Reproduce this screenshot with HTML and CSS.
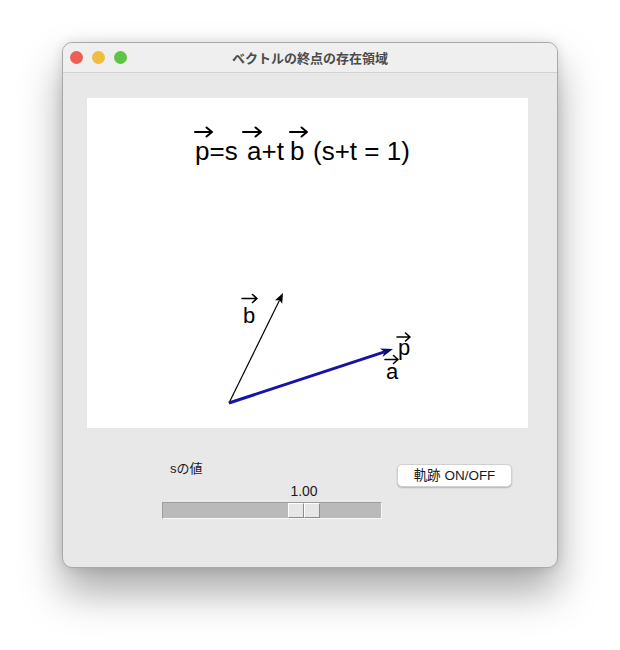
FILE: index.html
```html
<!DOCTYPE html>
<html lang="ja">
<head>
<meta charset="utf-8">
<title>ベクトルの終点の存在領域</title>
<link rel="stylesheet" href="styles.css">
</head>
<body>
<div class="window">
  <div class="titlebar">
    <div class="lights">
      <span class="light red"></span>
      <span class="light yellow"></span>
      <span class="light green"></span>
    </div>
    <div class="title">ベクトルの終点の存在領域</div>
    <div></div>
  </div>
  <div class="content">
    <svg class="canvas" width="441" height="330" viewBox="87 98 441 330" xmlns="http://www.w3.org/2000/svg">
      <rect x="87" y="98" width="441" height="330" fill="#ffffff"/>
      <!-- formula -->
      <g class="formula">
        <text x="195" y="160">p=s</text>
        <text x="247" y="160">a+t</text>
        <text x="290" y="160">b</text>
        <text x="313" y="160">(s+t = 1)</text>
      </g>
      <g fill="none" stroke="#000" stroke-width="2" stroke-linecap="round" stroke-linejoin="round">
        <path d="M195 132 H212 M206.5 127.5 L212 132 L206.5 136.5"/>
        <path d="M243 132 H261 M255.5 127.5 L261 132 L255.5 136.5"/>
        <path d="M290 132 H307 M301.5 127.5 L307 132 L301.5 136.5"/>
      </g>
      <!-- vector b -->
      <line x1="229" y1="403" x2="279.5" y2="300.2" stroke="#000" stroke-width="1.2"/>
      <polygon points="283,293 282.2,303.7 279.5,300.2 275,300.2" fill="#000"/>
      <!-- vector a (under p) -->
      <line x1="229" y1="403" x2="384.5" y2="351.8" stroke="#000" stroke-width="1"/>
      <!-- vector p -->
      <line x1="229" y1="403" x2="384.5" y2="351.8" stroke="#1414a8" stroke-width="3"/>
      <polygon points="393,349 382.6,357 384.5,351.8 380,348.6" fill="#0c0c6e"/>
      <!-- labels -->
      <g class="label">
        <text x="243" y="323">b</text>
        <text x="398" y="355">p</text>
        <text x="386" y="379">a</text>
      </g>
      <g fill="none" stroke="#000" stroke-width="1.6" stroke-linecap="round" stroke-linejoin="round">
        <path d="M242 298.5 H257 M252.5 294.5 L257 298.5 L252.5 302.5"/>
        <path d="M397 337 H410 M405.5 333 L410 337 L405.5 341"/>
        <path d="M385 359.5 H398 M393.5 355.5 L398 359.5 L393.5 363.5"/>
      </g>
    </svg>
    <div class="controls">
      <div class="scale">
        <div class="scale-label">sの値</div>
        <div class="scale-value" style="margin-left:124px">1.00</div>
        <div class="trough">
          <div class="thumb" style="margin-left:125px">
            <span class="thumb-half"></span>
            <span class="thumb-half"></span>
          </div>
        </div>
      </div>
      <button class="toggle">軌跡 ON/OFF</button>
    </div>
  </div>
</div>
</body>
</html>
```

FILE: styles.css
```css
html, body {
  margin: 0;
  padding: 0;
  background: #ffffff;
}

body {
  width: 620px;
  height: 650px;
  overflow: hidden;
  font-family: "Liberation Sans", "Noto Sans CJK JP", sans-serif;
}

.window {
  margin: 42px 0 0 62px;
  width: 496px;
  height: 526px;
  box-sizing: border-box;
  border: 1px solid #a9a9a9;
  border-radius: 10px;
  overflow: hidden;
  background: #e8e8e8;
  box-shadow: 0 24px 42px rgba(0, 0, 0, 0.34), 0 0 12px rgba(0, 0, 0, 0.12);
}

.titlebar {
  height: 29px;
  border-bottom: 1px solid #d2d2d2;
  background: #efefef;
  display: grid;
  grid-template-columns: 1fr auto 1fr;
  align-items: center;
}

.lights {
  display: flex;
  gap: 9px;
  padding-left: 7px;
}

.light {
  width: 13px;
  height: 13px;
  border-radius: 50%;
  display: block;
}

.red { background: #ec5f56; }
.yellow { background: #f2bc3d; }
.green { background: #5fc445; }

.title {
  font-family: "Noto Sans CJK JP", sans-serif;
  font-weight: 700;
  font-size: 13px;
  line-height: 16px;
  color: #4b4b4b;
}

.content {
  padding: 25px 0 0 24px;
}

.canvas {
  display: block;
}

.formula text {
  font-family: "Liberation Sans", sans-serif;
  font-size: 26px;
  fill: #000;
}

.label text {
  font-family: "Liberation Sans", sans-serif;
  font-size: 22px;
  fill: #000;
}

.controls {
  display: flex;
  align-items: flex-start;
  margin: 33px 0 0 75px;
  gap: 15px;
}

.scale {
  width: 220px;
  display: flex;
  flex-direction: column;
}

.scale-label {
  padding-left: 8px;
  font-family: "Liberation Sans", "Noto Sans CJK JP", sans-serif;
  font-size: 13px;
  line-height: 16px;
  color: #1a1a1a;
}

.scale-value {
  margin-top: 6px;
  width: 36px;
  text-align: center;
  font-size: 14px;
  line-height: 16px;
  color: #1a1a1a;
}

.trough {
  margin-top: 3px;
  height: 17px;
  box-sizing: border-box;
  background: #bababa;
  border-top: 1px solid #9d9d9d;
  border-left: 1px solid #9d9d9d;
  border-bottom: 1px solid #f7f7f7;
  border-right: 1px solid #f7f7f7;
  display: flex;
  align-items: center;
}

.thumb {
  display: flex;
  height: 15px;
}

.thumb-half {
  display: block;
  width: 16px;
  height: 15px;
  box-sizing: border-box;
  background: #e6e6e6;
  border-top: 1px solid #ffffff;
  border-left: 1px solid #ffffff;
  border-bottom: 1px solid #8c8c8c;
  border-right: 1px solid #8c8c8c;
}

.toggle {
  margin-top: 3px;
  width: 115px;
  height: 23px;
  padding: 0;
  border: 0.5px solid #d0d0d0;
  border-radius: 5px;
  background: #ffffff;
  box-shadow: 0 1px 1.5px rgba(0, 0, 0, 0.22);
  font-family: "Liberation Sans", "Noto Sans CJK JP", sans-serif;
  font-size: 13.5px;
  line-height: 16px;
  color: #1a1a1a;
}
```
